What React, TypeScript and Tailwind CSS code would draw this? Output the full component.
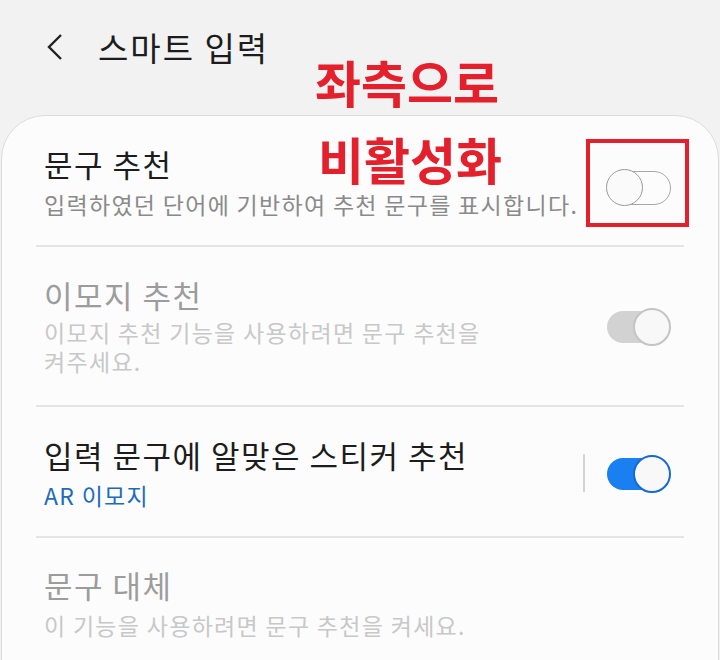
import React from 'react';

const kr = { fontFamily: '"Noto Sans CJK KR", "Noto Sans", sans-serif' };

type ToggleState = 'off' | 'disabled' | 'on';

const Toggle: React.FC<{ state: ToggleState }> = ({ state }) => {
  if (state === 'off') {
    return (
      <div className="relative h-[34px] w-[65px]">
        <div className="absolute left-[4px] right-0 top-[1px] h-[34px] rounded-full border-[1.5px] border-[#a8a8a8]" />
        <div className="absolute left-0 top-[-1px] h-[37px] w-[37px] rounded-full border-[1.5px] border-[#9a9a9a] bg-[#fafafa]" />
      </div>
    );
  }
  const track = state === 'on' ? 'bg-[#1a7ff0]' : 'bg-[#d2d2d2]';
  const knob = state === 'on' ? 'border-[#1769d2]' : 'border-[#c4c4c4]';
  return (
    <div className="relative h-[34px] w-[64px]">
      <div className={`absolute left-0 right-[4px] top-[2px] h-[32px] rounded-full ${track}`} />
      <div className={`absolute right-0 top-[-1px] h-[38px] w-[38px] rounded-full border-2 ${knob} bg-[#f8f8f8]`} />
    </div>
  );
};

const App: React.FC = () => {
  return (
    <div className="relative h-[660px] w-[720px] overflow-hidden bg-[#f2f2f2]" style={kr}>
      {/* header */}
      <header className="flex h-[115px] items-start pt-[24px]">
        <svg className="ml-[46px] mt-[9px]" width="18" height="28" viewBox="0 0 18 28">
          <path d="M15 2 L3 14 L15 26" fill="none" stroke="#222" strokeWidth="2.4" />
        </svg>
        <h1 className="ml-[34px] text-[33px] leading-[46px] tracking-[2px] text-[#1c1c1c]">스마트 입력</h1>
      </header>

      {/* card */}
      <main className="mx-[1px] rounded-t-[44px] border border-[#dcdcdc] bg-[#fcfcfc] pb-10">
        <section className="flex items-center pl-[42px] pr-[47px] pt-[28px] pb-[26px]">
          <div className="flex-1">
            <h2 className="text-[31px] leading-[40px] tracking-[1.5px] text-[#1c1c1c]">문구 추천</h2>
            <p className="mt-[5px] whitespace-nowrap text-[23px] leading-[30px] tracking-[1.3px] text-[#8a8a8a]">
              입력하였던 단어에 기반하여 추천 문구를 표시합니다.
            </p>
          </div>
          <div className="ml-[10px] mt-[10px]">
            <Toggle state="off" />
          </div>
        </section>
        <div className="mx-[34px] h-[2px] bg-[#e4e4e4]" />

        <section className="flex items-center pl-[42px] pr-[47px] pt-[28px] pb-[29px]">
          <div className="flex-1">
            <h2 className="text-[31px] leading-[40px] tracking-[1.5px] text-[#9c9c9c]">이모지 추천</h2>
            <p className="mt-[3px] w-[450px] break-keep text-[23px] leading-[29px] tracking-[1.3px] text-[#c8c8c8]">
              이모지 추천 기능을 사용하려면 문구 추천을 켜주세요.
            </p>
          </div>
          <Toggle state="disabled" />
        </section>
        <div className="mx-[34px] h-[2px] bg-[#e4e4e4]" />

        <section className="flex items-center pl-[42px] pr-[47px] pt-[28px] pb-[26px]">
          <div className="flex-1">
            <h2 className="text-[31px] leading-[40px] tracking-[1.5px] text-[#1c1c1c]">입력 문구에 알맞은 스티커 추천</h2>
            <p className="mt-[5px] text-[23px] leading-[30px] tracking-[1.3px] text-[#1d6bbd]">AR 이모지</p>
          </div>
          <div className="mr-[22px] h-[38px] w-[2px] bg-[#d4d4d4]" />
          <Toggle state="on" />
        </section>
        <div className="mx-[34px] h-[2px] bg-[#e4e4e4]" />

        <section className="flex items-center pl-[42px] pr-[47px] pt-[27px]">
          <div className="flex-1">
            <h2 className="text-[31px] leading-[40px] tracking-[1.5px] text-[#9c9c9c]">문구 대체</h2>
            <p className="mt-[5px] text-[23px] leading-[30px] tracking-[1.3px] text-[#c8c8c8]">
              이 기능을 사용하려면 문구 추천을 켜세요.
            </p>
          </div>
        </section>
      </main>

      {/* red annotations */}
      <div className="absolute left-[315px] top-[51px] text-[50px] font-bold leading-[60px] text-[#e4202c]">
        좌측으로
      </div>
      <div className="absolute left-[318px] top-[128px] text-[50px] font-bold leading-[60px] text-[#e4202c]">
        비활성화
      </div>
      <div className="absolute left-[586px] top-[139px] h-[88px] w-[103px] border-4 border-[#e4202c]" />
    </div>
  );
};

export default App;
